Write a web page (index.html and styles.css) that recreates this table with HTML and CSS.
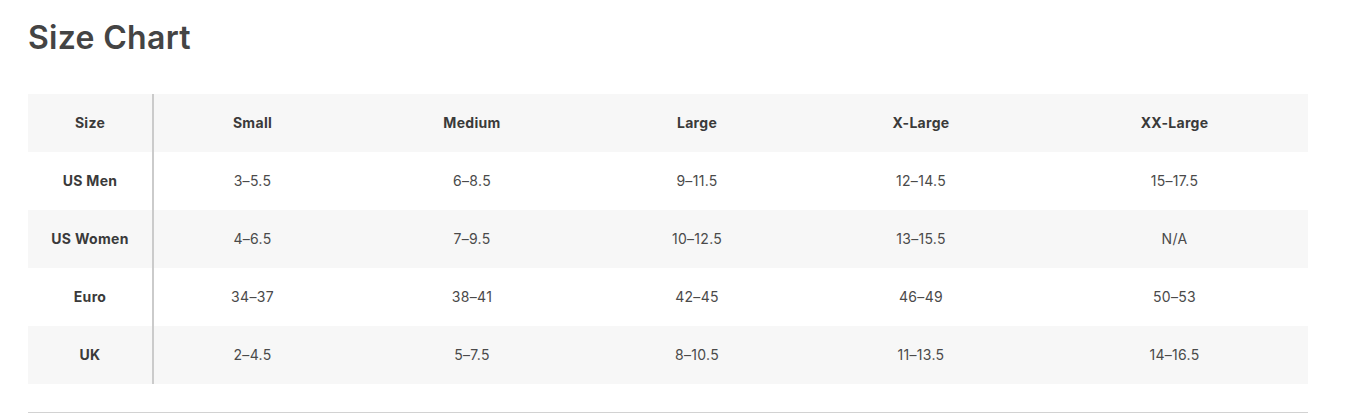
FILE: index.html
```html
<!DOCTYPE html>
<html lang="en">
<head>
<meta charset="utf-8">
<title>Size Chart</title>
<link rel="stylesheet" href="styles.css">
</head>
<body>
<main class="page">
  <h1 class="title">Size Chart</h1>
  <table class="chart">
    <colgroup>
      <col class="c0"><col class="c1"><col class="c2"><col class="c3"><col class="c4"><col class="c5">
    </colgroup>
    <thead>
      <tr><th class="lead">Size</th><th>Small</th><th>Medium</th><th>Large</th><th>X-Large</th><th>XX-Large</th></tr>
    </thead>
    <tbody>
      <tr><th class="lead">US Men</th><td>3–5.5</td><td>6–8.5</td><td>9–11.5</td><td>12–14.5</td><td>15–17.5</td></tr>
      <tr><th class="lead">US Women</th><td>4–6.5</td><td>7–9.5</td><td>10–12.5</td><td>13–15.5</td><td>N/A</td></tr>
      <tr><th class="lead">Euro</th><td>34–37</td><td>38–41</td><td>42–45</td><td>46–49</td><td>50–53</td></tr>
      <tr><th class="lead">UK</th><td>2–4.5</td><td>5–7.5</td><td>8–10.5</td><td>11–13.5</td><td>14–16.5</td></tr>
    </tbody>
  </table>
  <hr class="rule">
</main>
</body>
</html>
```
FILE: styles.css
```css
html, body {
  margin: 0;
  padding: 0;
  background: #fff;
}
body {
  font-family: Inter, "Open Sans", "Liberation Sans", sans-serif;
  color: #444;
}
.page {
  padding: 18px 53px 0 28px;
}
.title {
  margin: 0;
  font-size: 32px;
  line-height: 40px;
  font-weight: 600;
  color: #444;
  letter-spacing: 0.3px;
}
.chart {
  margin-top: 36px;
  width: 1280px;
  border-collapse: collapse;
  table-layout: fixed;
}
.c0 { width: 125px; }
.c1 { width: 198px; }
.c2 { width: 242px; }
.c3 { width: 208px; }
.c4 { width: 240px; }
.c5 { width: 267px; }
.chart th, .chart td {
  height: 58px;
  box-sizing: border-box;
  padding: 0 0 2px;
  text-align: center;
  vertical-align: middle;
  font-size: 14px;
  letter-spacing: 0.3px;
}
.chart th {
  font-weight: 700;
  color: #3a3a3a;
}
.chart td {
  font-weight: 400;
  color: #4a4a4a;
}
.chart thead tr,
.chart tbody tr:nth-child(even) {
  background: #f7f7f7;
}
.chart .lead {
  border-right: 2px solid #cbcbcb;
}
.rule {
  margin: 28px 0 0;
  width: 1280px;
  border: 0;
  border-top: 1px solid #d2d2d2;
}
```
